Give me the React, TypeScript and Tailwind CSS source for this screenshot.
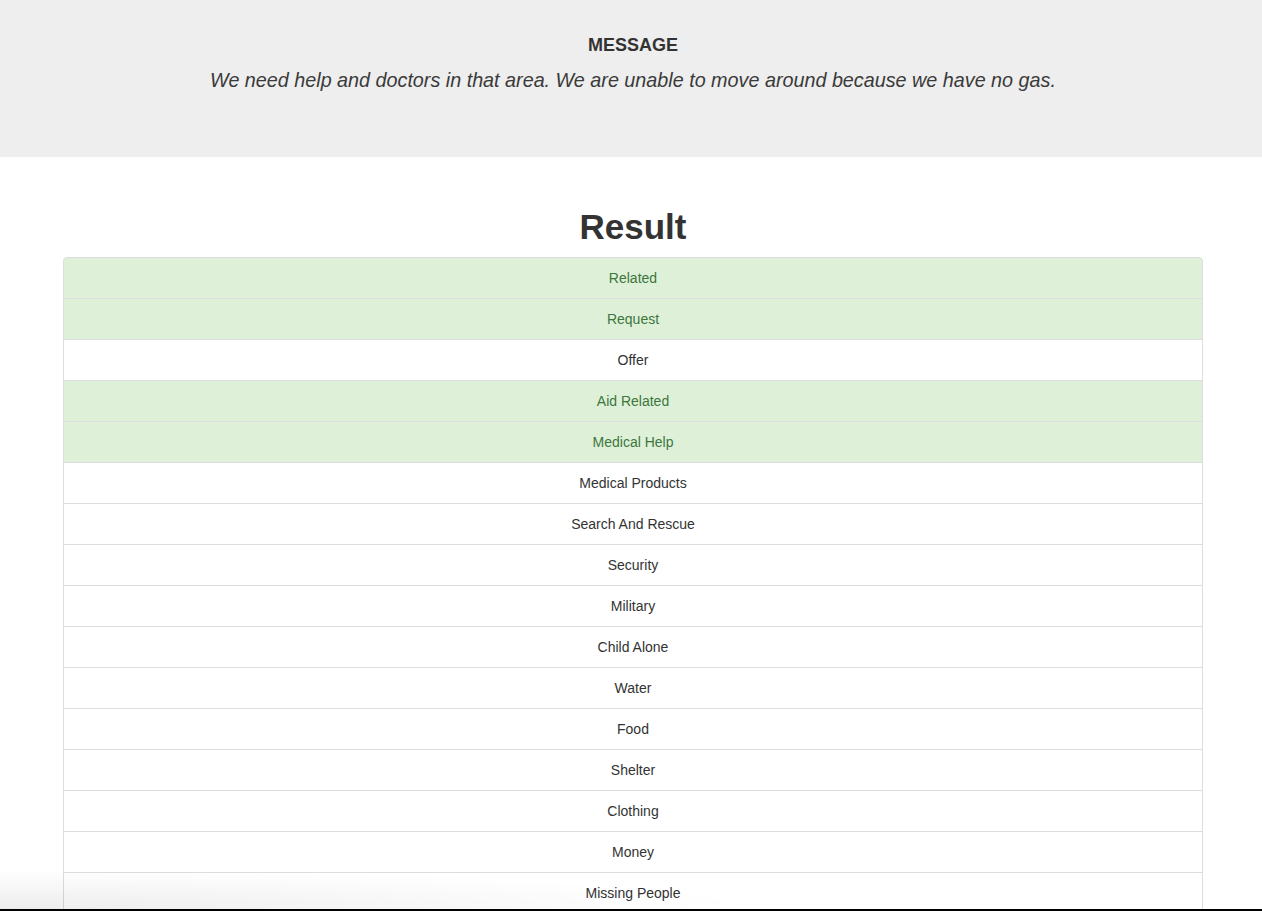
import React from "react";

const items: { label: string; on: boolean }[] = [
  { label: "Related", on: true },
  { label: "Request", on: true },
  { label: "Offer", on: false },
  { label: "Aid Related", on: true },
  { label: "Medical Help", on: true },
  { label: "Medical Products", on: false },
  { label: "Search And Rescue", on: false },
  { label: "Security", on: false },
  { label: "Military", on: false },
  { label: "Child Alone", on: false },
  { label: "Water", on: false },
  { label: "Food", on: false },
  { label: "Shelter", on: false },
  { label: "Clothing", on: false },
  { label: "Money", on: false },
  { label: "Missing People", on: false },
];

export default function App() {
  return (
    <div
      className="min-h-[911px] bg-white text-[#333]"
      style={{ fontFamily: '"Liberation Sans", Arial, sans-serif' }}
    >
      <div className="h-[157px] bg-[#eee] pl-1 text-center">
        <h4 className="pt-[35px] text-[18px] font-bold leading-[20px] text-[#333]">MESSAGE</h4>
        <p className="mt-[10px] text-[19.75px] font-light italic leading-[30px] text-[#3a3a3a]">
          We need help and doctors in that area. We are unable to move around because we have no gas.
        </p>
      </div>
      <div className="pl-1">
        <div className="mx-auto w-[1140px]">
          <h1 className="pt-[50px] pb-[10px] text-center text-[35px] font-bold leading-[40px] text-[#333]">
            Result
          </h1>
          <ul className="flex flex-col">
            {items.map((it, i) => (
              <li
                key={it.label}
                className={
                  (it.on ? "bg-[#dff0d8] text-[#3c763d] " : "bg-white text-[#333] ") +
                  (i === 0 ? "rounded-t-[4px] " : "-mt-px ") +
                  "border border-[#ddd] px-[15px] py-[10px] text-center text-[14px] leading-[20px]"
                }
              >
                {it.label}
              </li>
            ))}
          </ul>
        </div>
      </div>
      <div className="pointer-events-none fixed bottom-0 left-0 right-0 h-[42px]">
        <div className="absolute bottom-[2px] left-0 h-[40px] w-[760px] bg-[radial-gradient(ellipse_100%_100%_at_0%_100%,rgba(0,0,0,0.07),rgba(0,0,0,0.02)_70%,rgba(0,0,0,0)_100%)]" />
        <div className="absolute bottom-0 left-0 right-0 h-[2px] bg-black" />
      </div>
    </div>
  );
}
